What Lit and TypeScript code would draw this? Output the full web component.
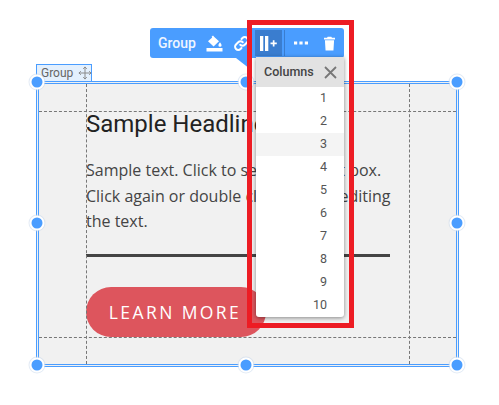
import { LitElement, html, css, svg } from "lit";
import { customElement } from "lit/decorators.js";

const handles: [number, number][] = [
  [37, 82], [246, 82], [457, 82],
  [37, 223], [457, 223],
  [37, 365], [246, 365], [457, 365],
];
const cols = [1, 2, 3, 4, 5, 6, 7, 8, 9, 10];

@customElement("app-root")
export class AppRoot extends LitElement {
  static styles = css`
    :host { display: block; width: 499px; height: 405px; background: #fff; position: relative; overflow: hidden; font-family: Roboto, sans-serif; }
    .section { position: absolute; left: 36px; top: 81px; width: 423px; height: 286px; box-sizing: border-box; border: 3px double #4a9dff; background: #f1f1f1; padding: 24px 0 0 47px; }
    .guide-h { position: absolute; left: 0; right: 0; border-top: 1px dashed #777; }
    .guide-v { position: absolute; top: 0; bottom: 0; border-left: 1px dashed #777; }
    h1 { margin: 0; font: 400 24px/32px Roboto, sans-serif; color: #222; white-space: nowrap; }
    p { margin: 18px 0 0; width: 320px; font: 400 16px/25.6px "Open Sans", sans-serif; color: #444; }
    .rule { height: 3px; background: #444; margin: 19px 0 0; width: 304px; }
    .btn { margin-top: 30px; width: 178px; height: 50px; padding-right: 2px; box-sizing: content-box; border-radius: 25px; background: #dd555d; color: #fff; font: 400 17.5px/50px "Open Sans", sans-serif; letter-spacing: 2.4px; text-align: center; white-space: nowrap; }
    .tab { position: absolute; left: 36px; top: 64px; width: 56px; height: 17px; box-sizing: border-box; border: 1px solid #4a9dff; border-bottom: 0; background: #e4f0fd; color: #666; font: 400 12px/15px Roboto, sans-serif; display: flex; align-items: center; gap: 5px; padding-left: 4px; }
    .tab svg { width: 14px; height: 14px; flex: none; }
    .handle { position: absolute; width: 11px; height: 11px; border-radius: 50%; background: #4a9dff; box-shadow: 0 0 0 2px #fff, 0 0 0 3px rgba(200,215,235,.5); transform: translate(-50%, -50%); }
    .arrow { position: absolute; left: 236px; top: 58px; }
    .arrow svg { display: block; }
    .toolbar { position: absolute; left: 150px; top: 28px; width: 194px; height: 30px; box-sizing: border-box; background: #4a9dff; border-radius: 3px; color: #fff; display: flex; align-items: center; padding-left: 8px; }
    .name { font: 500 14px/30px Roboto, sans-serif; color: #eef5ff; width: 45px; }
    .ico { display: flex; align-items: center; justify-content: center; }
    .ico svg { display: block; }
    .paint { width: 22px; }
    .link { width: 16px; margin-left: 8px; }
    .active { width: 27px; height: 26px; margin-left: 6px; background: #3a7dcf; }
    .sep { width: 1px; height: 26px; background: #3a7dcf; margin-left: 2px; }
    .dots { width: 16px; margin-left: 8px; }
    .trash { width: 14px; margin-left: 13px; }
    .menu { position: absolute; left: 256px; top: 57px; width: 88px; height: 260px; background: #fff; border-radius: 0 0 3px 3px; box-shadow: 0 1px 4px rgba(0,0,0,.45); }
    .menu-head { height: 30px; background: #e2e2e2; display: flex; align-items: center; justify-content: space-between; padding: 0 7px 0 8px; font: 500 12.5px/30px Roboto, sans-serif; color: #444; }
    .item { height: 23px; text-align: right; padding-right: 17px; font: 400 12.5px/21px Roboto, sans-serif; color: #555; }
    .item.hl { background: #f4f4f4; }
    .frame { position: absolute; left: 247px; top: 20px; width: 107px; height: 308px; box-sizing: border-box; border: 5px solid #ed1c24; pointer-events: none; }
  `;

  render() {
    return html`
      <div class="section">
        <h1>Sample Headline</h1>
        <p>Sample text. Click to select the text box. Click again or double click to start editing the text.</p>
        <div class="rule"></div>
        <div class="btn">LEARN MORE</div>
        <div class="guide-h" style="top:27px"></div>
        <div class="guide-h" style="top:253px"></div>
        <div class="guide-v" style="left:47px"></div>
        <div class="guide-v" style="left:370px"></div>
      </div>
      <div class="tab">Group
        <svg viewBox="0 0 14 14" fill="none" stroke="#8a8a8a" stroke-width="1">
          ${svg`<path d="M7 .8v12.4M.8 7h12.4M5.2 2.800 7 1l1.800 1.800M5.200 11.200 7 13l1.800-1.800M2.800 5.200 1 7l1.800 1.800M11.200 5.200 13 7l-1.800 1.800"/>`}
        </svg>
      </div>
      ${handles.map(([x, y]) => html`<div class="handle" style="left:${x}px;top:${y}px"></div>`)}
      <div class="arrow"><svg width="14" height="11" viewBox="0 0 14 11"><path d="M0 0H14V11Z" fill="#4a9dff"/></svg></div>
      <div class="toolbar">
        <span class="name">Group</span>
        <span class="ico paint"><svg width="17" height="17" viewBox="0 0 17 17" fill="#fff"><path d="M7 0.500 8.300 2 13 6.300 7.600 11.500 2 6.200 6.200 2.600 5.600 1.800ZM14 7.200c1 1.300 1.600 2.200 1.600 3a1.600 1.600 0 0 1-3.200 0c0-.8.600-1.700 1.600-3Z"/><rect x="0.500" y="13" width="16" height="3.500"/></svg></span>
        <span class="ico link"><svg width="15" height="15" viewBox="0 0 24 24" fill="none" stroke="#fff" stroke-width="3.200" stroke-linecap="round"><path d="M10 14a5 5 0 0 0 7.200 0l3.600-3.600a5 5 0 0 0-7.200-7.200L12 4.800"/><path d="M14 10a5 5 0 0 0-7.200 0l-3.600 3.600a5 5 0 0 0 7.200 7.200l1.600-1.600"/></svg></span>
        <span class="ico active"><svg width="18" height="15" viewBox="0 0 18 15" fill="#fff"><rect x="0" y="0" width="3.300" height="15"/><rect x="5" y="0" width="3.300" height="15"/><path d="M10.500 6.500h2.300V4.200h1.700v2.300h2.300v1.700h-2.300v2.300h-1.700V8.200h-2.300Z"/></svg></span>
        <span class="sep"></span>
        <span class="ico dots"><svg width="14" height="4" viewBox="0 0 14 4" fill="#fff"><rect x="0" y="0.500" width="3.200" height="3"/><rect x="5.400" y="0.500" width="3.200" height="3"/><rect x="10.800" y="0.500" width="3.200" height="3"/></svg></span>
        <span class="ico trash"><svg width="11" height="15" viewBox="0 0 12 15" fill="#fff"><path d="M4 0h4l.7 1.200H12v1.800H0V1.200h3.300ZM1 4h10l-.7 11H1.700Z"/></svg></span>
      </div>
      <div class="menu">
        <div class="menu-head">Columns
          <svg width="13" height="13" viewBox="0 0 13 13" stroke="#777" stroke-width="1.800" fill="none"><path d="M1 1 12 12M12 1 1 12"/></svg>
        </div>
        <div>
          ${cols.map((c) => html`<div class="item ${c === 3 ? "hl" : ""}">${c}</div>`)}
        </div>
      </div>
      <div class="frame"></div>
    `;
  }
}
